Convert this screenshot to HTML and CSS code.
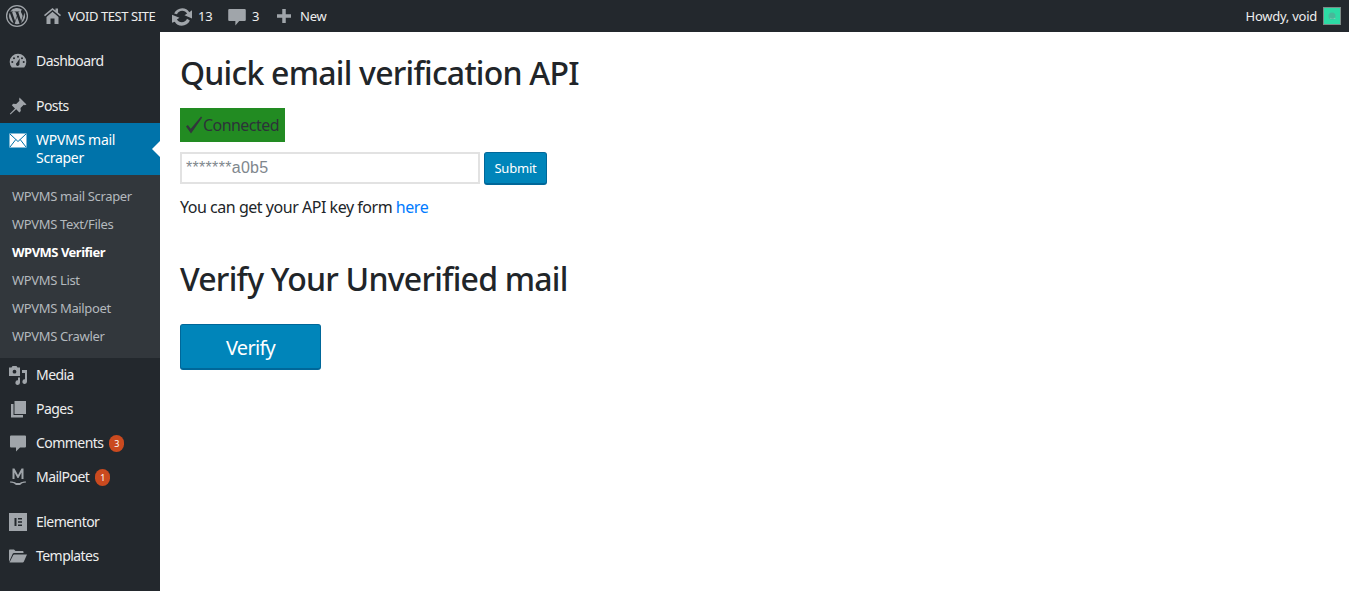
FILE: index.html
```html
<!DOCTYPE html>
<html lang="en">
<head>
<meta charset="utf-8">
<title>Quick email verification API</title>
<link rel="stylesheet" href="styles.css">
</head>
<body>
<header class="adminbar">
  <div class="bar-group">
    <span class="bar-item wp-item">
      <svg class="wp-logo" viewBox="0 0 24 24"><circle cx="12" cy="12" r="10.4" fill="none" stroke="#a0a5aa" stroke-width="1.3"/><path fill="#a0a5aa" d="M4 12c0 3.2 1.900 6 4.600 7.300L4.800 8.800C4.300 9.900 4 10.900 4 12zm13.400-.4c0-1-.4-1.700-.7-2.200-.4-.7-.8-1.200-.8-1.900 0-.7.6-1.400 1.400-1.400h.1A8 8 0 0 0 5.300 7.600h.5c.8 0 2.100-.1 2.100-.1.400 0 .5.600.1.600 0 0-.4.100-.9.100l3 8.800 1.800-5.300-1.300-3.500c-.4 0-.8-.1-.8-.1-.4 0-.4-.7.100-.6 0 0 1.300.1 2.100.1s2.100-.1 2.100-.1c.4 0 .5.600.1.600 0 0-.4.100-.9.100l2.900 8.800.8-2.800c.4-1.100.6-1.900.6-2.600zM12.100 12.800l-2.400 7a8 8 0 0 0 4.900-.1l-.1-.1-2.400-6.800zM19 8.300c0 .3.100.6.100.9 0 .8-.2 1.800-.6 2.900l-2.400 7A8 8 0 0 0 19 8.300z"/></svg>
    </span>
    <span class="bar-item site-item">
      <svg class="bar-icon home-icon" viewBox="1.500 3 17 16"><path d="M1.500 10 10 3l3 2.500V3.500h2.500v4.100L18.500 10l-1 1.200L10 5 2.500 11.200z"/><path d="M4 12 10 6.800l6 5.200v7h-4v-5.500H8V19H4z"/></svg>
      <span class="bar-text site-name">VOID TEST SITE</span>
    </span>
    <span class="bar-item updates-item">
      <svg class="bar-icon updates-icon" viewBox="2 2.500 16 15"><path d="M10.200 3.300c2.400 0 4.500 1.300 5.600 3.200L18 5v6.500l-6-2.500 2.100-1.400c-.8-1.300-2.300-2.200-3.900-2.200-1.900 0-3.500 1.100-4.200 2.800L3.700 7.500C4.900 5 7.300 3.300 10.200 3.300zM2 8.500l6 2.500-2.100 1.400c.8 1.300 2.300 2.200 3.900 2.200 1.900 0 3.500-1.100 4.200-2.800l2.300 1.300c-1.200 2.500-3.600 4.200-6.500 4.200-2.400 0-4.500-1.300-5.600-3.200L2 15z"/></svg>
      <span class="bar-text">13</span>
    </span>
    <span class="bar-item comments-item">
      <svg class="bar-icon comments-icon" viewBox="2 3 16 15.500"><path d="M3 3h14a1 1 0 0 1 1 1v9a1 1 0 0 1-1 1h-5l-3.500 4v-4H3a1 1 0 0 1-1-1V4a1 1 0 0 1 1-1z"/></svg>
      <span class="bar-text">3</span>
    </span>
    <span class="bar-item new-item">
      <svg class="bar-icon new-icon" viewBox="4 4 12 12"><path d="M8.500 4h3v4.500H16v3h-4.500V16h-3v-4.500H4v-3h4.500z"/></svg>
      <span class="bar-text">New</span>
    </span>
  </div>
  <div class="bar-group howdy">
    <span class="bar-text">Howdy, void</span>
    <span class="avatar"><svg viewBox="0 0 16 16"><circle cx="8" cy="8" r="3.500" fill="#48b89a"/><path d="M6 9.500a3 3 0 0 0 5 0l.5 1.500h-5z" fill="#7fd0b5"/></svg></span>
  </div>
</header>

<div class="shell">
  <nav class="sidebar">
    <ul class="menu">
      <li class="menu-item">
        <svg class="menu-icon" viewBox="0 0 20 20"><path d="M3.800 16.500A8.300 8.300 0 1 1 16.200 16.500zM10 4.800a1 1 0 1 0 0 2 1 1 0 0 0 0-2zM6 6.200a1 1 0 1 0 0 2 1 1 0 0 0 0-2zM14 6.200a1 1 0 1 0 0 2 1 1 0 0 0 0-2zM4.300 10a1 1 0 1 0 0 2 1 1 0 0 0 0-2zM15.700 10a1 1 0 1 0 0 2 1 1 0 0 0 0-2zM11.800 7.500l-2.900 4.200a1.700 1.700 0 1 0 2.500 1z" fill-rule="evenodd"/></svg>
        <span class="menu-label">Dashboard</span>
      </li>
      <li class="menu-item posts-item">
        <svg class="menu-icon" viewBox="0 0 20 20"><path d="M11.500 1.500l7 7-1.700.7-1-.4-3.300 3.300.3 3-1.400 1.400-3.200-3.200L2.500 18.500l-.7-.7 5.200-5.400L3.800 9.200l1.400-1.400 3 .3 3.300-3.300-.4-1z"/></svg>
        <span class="menu-label">Posts</span>
      </li>
      <li class="menu-item active-item">
        <svg class="menu-icon" viewBox="0 0 20 20"><path d="M1.500 2.500h17v14h-17z" fill="#fff"/><path d="M2 3 10 10.500 18 3M2 16 7.800 8.500M18 16 12.200 8.500" fill="none" stroke="#0073aa" stroke-width="1"/></svg>
        <span class="active-label">WPVMS mail Scraper</span>
        <i class="active-arrow"></i>
      </li>
    </ul>
    <ul class="submenu">
      <li>WPVMS mail Scraper</li>
      <li>WPVMS Text/Files</li>
      <li class="current">WPVMS Verifier</li>
      <li>WPVMS List</li>
      <li>WPVMS Mailpoet</li>
      <li>WPVMS Crawler</li>
    </ul>
    <ul class="menu">
      <li class="menu-item">
        <svg class="menu-icon" viewBox="0 0 20 20"><path d="M1 2.500h2.500l1-1.500h4l1 1.500H12v8.500H1zM6.500 4.800a1.900 1.900 0 1 0 0 3.800 1.900 1.900 0 0 0 0-3.800zM14 5h5v11.500a2.300 2.300 0 1 1-2-2.200V8h-3zM12 12.500v5a2.300 2.300 0 1 1-2-2.200v-2.800z" fill-rule="evenodd"/></svg>
        <span class="menu-label">Media</span>
      </li>
      <li class="menu-item">
        <svg class="menu-icon" viewBox="0 0 20 20"><path d="M6.500 2H18v13H6.500zM3 5h2.500v11H15v2.500H3z"/></svg>
        <span class="menu-label">Pages</span>
      </li>
      <li class="menu-item">
        <svg class="menu-icon" viewBox="0 0 20 20"><path d="M3 2.500h14a1 1 0 0 1 1 1v10a1 1 0 0 1-1 1h-5l-4 4v-4H3a1 1 0 0 1-1-1v-10a1 1 0 0 1 1-1z"/></svg>
        <span class="menu-label">Comments</span><b class="count">3</b>
      </li>
      <li class="menu-item">
        <svg class="menu-icon" viewBox="0 0 20 20"><path d="M4.500 1.500H6.500L10 8l3.500-6.500h2V12H13.500V5.500L10.500 11H9.500L6.500 5.500V12H4.500z"/><path d="M2 14.500c3 0 5 .5 6 1.500h4c1-1 3-1.500 6-1.500v1c-2.500 0-4 .7-5 1.800l-1 .7h-4l-1-.7C6 16.200 4.500 15.500 2 15.500z"/></svg>
        <span class="menu-label">MailPoet</span><b class="count">1</b>
      </li>
      <li class="menu-item elementor-item">
        <svg class="menu-icon" viewBox="0 0 20 20"><path fill-rule="evenodd" d="M1 1h18v18H1zM6.500 6v8h2V6zM10 6v1.600h4V6zM10 9.200v1.600h4V9.200zM10 12.400V14h4v-1.600z"/></svg>
        <span class="menu-label">Elementor</span>
      </li>
      <li class="menu-item">
        <svg class="menu-icon" viewBox="0 0 20 20"><path d="M1 16V4.500c0-.5.4-1 1-1h4l1.500 1.500h7c.5 0 1 .4 1 1v1H6c-.6 0-1 .3-1.300.8zM1.500 16.500 5.300 9c.2-.4.500-.6 1-.6H19l-3.200 7.300c-.2.500-.6.800-1.100.800z"/></svg>
        <span class="menu-label">Templates</span>
      </li>
    </ul>
  </nav>

  <main class="content">
    <h1 class="title">Quick email verification API</h1>
    <div class="status">
      <svg class="check" viewBox="0 0 18 18"><path d="M1 10.500 2.800 9l3 3.800L16 .5 17.200 1.500 6 17.500z"/></svg>
      <span>Connected</span>
    </div>
    <form class="api-form">
      <input class="api-input" type="text" placeholder="*******a0b5">
      <button class="btn btn-small" type="button">Submit</button>
    </form>
    <p class="hint">You can get your API key form <a href="#">here</a></p>
    <h2 class="title second">Verify Your Unverified mail</h2>
    <button class="btn btn-large" type="button">Verify</button>
  </main>
</div>
</body>
</html>
```
FILE: styles.css
```css
* { box-sizing: border-box; }
html, body { height: 100%; }
body {
  margin: 0;
  background: #fff;
  color: #212529;
  font-family: "Noto Sans", "Open Sans", sans-serif;
  overflow: hidden;
  display: flex;
  flex-direction: column;
}
ul { list-style: none; margin: 0; padding: 0; }

.adminbar {
  height: 32px;
  flex: none;
  background: #23282d;
  color: #eee;
  display: flex;
  justify-content: space-between;
  align-items: center;
  font-size: 13px;
  letter-spacing: -0.25px;
}
.bar-group { display: flex; align-items: center; }
.bar-item { display: flex; align-items: center; height: 32px; }
.wp-item { padding-left: 5px; width: 44px; }
.wp-logo { width: 24px; height: 24px; }
.bar-icon { fill: #a0a5aa; flex: none; }
.home-icon { width: 17px; height: 16px; }
.updates-icon { width: 20px; height: 19px; }
.comments-icon { width: 18px; height: 17px; margin-top: 2px; }
.new-icon { width: 14px; height: 14px; }
.site-item { width: 128px; gap: 7px; }
.site-name { letter-spacing: -0.42px; }
.updates-item { width: 56px; gap: 6px; }
.comments-item { width: 49px; gap: 6px; }
.new-item { gap: 9px; }
.howdy { gap: 6px; padding-right: 8px; }
.avatar {
  width: 18px;
  height: 18px;
  background: #2ddba5;
  border: 1px solid #7c8a86;
  display: block;
}
.avatar svg { display: block; width: 100%; height: 100%; }

.shell { flex: 1; display: flex; min-height: 0; }
.sidebar {
  width: 160px;
  flex: none;
  background: #23282d;
  padding-top: 12px;
  font-size: 14px;
  letter-spacing: -0.55px;
}
.menu-item {
  position: relative;
  display: flex;
  align-items: center;
  height: 34px;
  padding-left: 8px;
  color: #eee;
}
.menu-icon { width: 20px; height: 20px; fill: #a0a5aa; flex: none; margin-right: 8px; }
.menu-label { padding-bottom: 2px; }
.posts-item { margin-top: 11px; }
.elementor-item { margin-top: 11px; }
.active-item {
  height: 52px;
  background: #0073aa;
  color: #fff;
  align-items: flex-start;
  padding-top: 8px;
  line-height: 18px;
  letter-spacing: -0.3px;
}
.active-label { width: 105px; }
.active-arrow {
  position: absolute;
  right: 0;
  top: 18px;
  border: 8px solid transparent;
  border-right-color: #fff;
  border-left-width: 0;
}
.submenu {
  background: #32373c;
  padding: 7px 0 8px;
  font-size: 13px;
  letter-spacing: -0.35px;
  color: #b4b9be;
}
.submenu li { height: 28px; line-height: 28px; padding-left: 12px; }
.submenu .current { color: #fff; font-weight: 700; letter-spacing: -0.5px; }
.count {
  width: 15px;
  height: 17px;
  border-radius: 9px;
  background: #ca4a1f;
  color: #fff;
  font-size: 9px;
  font-weight: 400;
  line-height: 17px;
  text-align: center;
  margin-left: 6px;
  letter-spacing: 0;
}

.content { flex: 1; padding: 0 20px; min-width: 0; }
.title {
  margin: 0;
  font-size: 32px;
  font-weight: 500;
  line-height: 38px;
  letter-spacing: -0.77px;
  padding-top: 22px;
}
.status {
  margin-top: 16px;
  width: 105px;
  height: 34px;
  background: #228b22;
  color: #2c3338;
  display: flex;
  align-items: center;
  padding-left: 5px;
  font-size: 16px;
  letter-spacing: -0.55px;
}
.check { width: 18px; height: 18px; fill: #32373c; flex: none; }
.api-form { margin-top: 10px; display: flex; gap: 4px; align-items: flex-start; }
.api-input {
  width: 300px;
  height: 32px;
  border: 2px solid #e2e2e2;
  padding: 0 4px;
  font-family: "Liberation Sans", sans-serif;
  font-size: 16px;
  letter-spacing: 0.3px;
  outline: 0;
  background: #fff;
}
.api-input::placeholder { color: #80878d; opacity: 1; }
.btn {
  background: #0085ba;
  border: 1px solid #006799;
  border-bottom-width: 2px;
  border-radius: 3px;
  color: #fff;
  font-family: inherit;
  padding: 0;
}
.btn-small { width: 63px; height: 33px; font-size: 13px; letter-spacing: -0.2px; }
.btn-large { width: 141px; height: 46px; font-size: 20px; display: block; margin-top: 26px; padding-top: 2px; letter-spacing: -0.7px; }
.hint { margin: 10px 0 0; font-size: 16px; line-height: 24px; letter-spacing: -0.47px; }
.hint a { color: #007bff; text-decoration: none; }
.second { padding-top: 41px; }
```
